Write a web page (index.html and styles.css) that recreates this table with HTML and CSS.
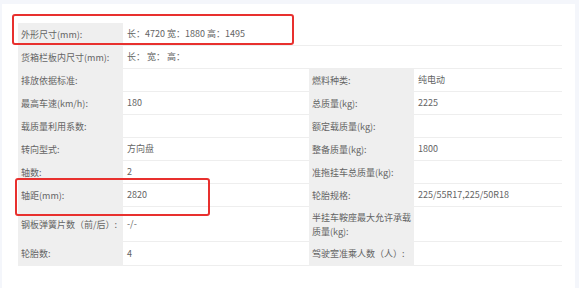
FILE: index.html
```html
<!DOCTYPE html>
<html lang="zh">
<head>
<meta charset="utf-8">
<link rel="stylesheet" href="styles.css">
</head>
<body>
<div class="card">
  <div class="spec">
    <div class="lab">外形尺寸(mm):</div><div class="val wide">长：4720 宽：1880 高：1495</div>
    <div class="lab">货箱栏板内尺寸(mm):</div><div class="val wide">长：&nbsp;宽：&nbsp;高：</div>
    <div class="lab">排放依据标准:</div><div class="val"></div>
    <div class="lab">燃料种类:</div><div class="val">纯电动</div>
    <div class="lab">最高车速(km/h):</div><div class="val">180</div>
    <div class="lab">总质量(kg):</div><div class="val">2225</div>
    <div class="lab">载质量利用系数:</div><div class="val"></div>
    <div class="lab">额定载质量(kg):</div><div class="val"></div>
    <div class="lab">转向型式:</div><div class="val">方向盘</div>
    <div class="lab">整备质量(kg):</div><div class="val">1800</div>
    <div class="lab">轴数:</div><div class="val">2</div>
    <div class="lab">准拖挂车总质量(kg):</div><div class="val"></div>
    <div class="lab">轴距(mm):</div><div class="val">2820</div>
    <div class="lab">轮胎规格:</div><div class="val">225/55R17,225/50R18</div>
    <div class="lab">钢板弹簧片数（前/后）:</div><div class="val">-/-</div>
    <div class="lab">半挂车鞍座最大允许承载质量(kg):</div><div class="val"></div>
    <div class="lab">轮胎数:</div><div class="val">4</div>
    <div class="lab">驾驶室准乘人数（人）:</div><div class="val"></div>
  </div>
  <div class="mark mark-size"></div>
  <div class="mark mark-wheelbase"></div>
</div>
</body>
</html>
```
FILE: styles.css
```css
html, body {
  margin: 0;
  padding: 0;
  background: #f4f6fb;
  height: 288px;
  overflow: hidden;
}
body {
  padding: 4px 4px 0 2px;
  box-sizing: border-box;
  font-family: "Noto Sans CJK SC", "Noto Sans", sans-serif;
  font-size: 9px;
  color: #646464;
}
.card {
  position: relative;
  background: #fff;
  height: 284px;
  padding: 19px 11px 0 16px;
  box-sizing: border-box;
}
.spec {
  display: grid;
  grid-template-columns: 105px 186px 105px 148px;
  grid-template-rows: repeat(8, 23px) 35px 24px;
}
.spec > div {
  display: flex;
  align-items: center;
  padding: 0 3px;
  line-height: 14px;
  white-space: normal;
}
.lab {
  background: #efefef;
}
.val {
  border-bottom: 1px solid #eeeeee;
  padding-left: 4px !important;
}
.wide {
  grid-column: span 3;
}
.mark {
  position: absolute;
  border: 2px solid #e8302e;
  border-radius: 3px;
}
.mark-size {
  left: 10px;
  top: 10px;
  width: 278px;
  height: 27px;
}
.mark-wheelbase {
  left: 13px;
  top: 174px;
  width: 191px;
  height: 34px;
}
```
